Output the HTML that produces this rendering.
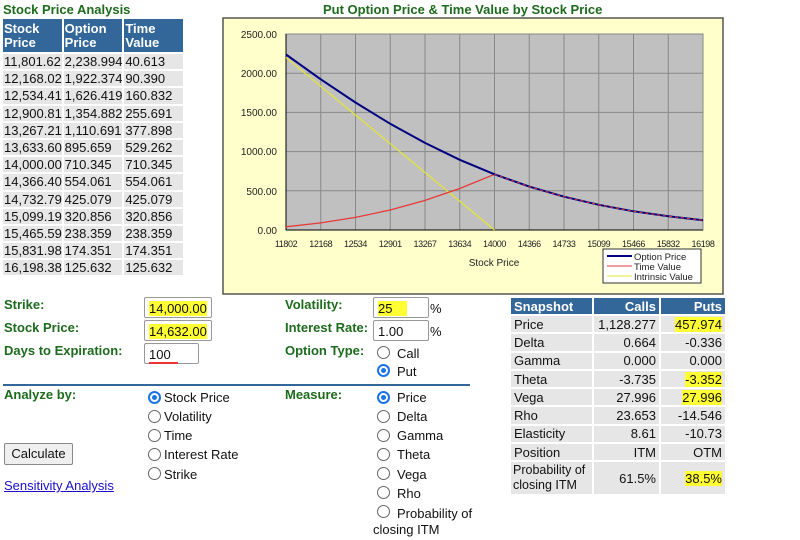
<!DOCTYPE html>
<html><head><style>
*{margin:0;padding:0;box-sizing:border-box}
body{width:800px;height:540px;background:#fff;font-family:"Liberation Sans",Arial,sans-serif;font-size:13px;color:#111;position:relative;overflow:hidden}
.a{position:absolute;white-space:nowrap}
.g{color:#1d6b1d;font-weight:bold}
table{border-collapse:separate;border-spacing:2px;position:absolute;table-layout:fixed}
td,th{background:#e6e6e6;padding:0 1px;font-size:13px;font-weight:normal;text-align:left;white-space:nowrap;overflow:hidden}
th{background:#336699;color:#fff;font-weight:bold}
.inp{position:absolute;border:1px solid #999;background:#fff;padding:3px 4px;font-size:13px;height:21px;border-radius:2px}
.hl{background:#ffff33;}
.r{position:absolute;width:13px;height:13px;border:1px solid #666;border-radius:50%;background:#fff}
.r.on{border:2px solid #1a73e8}
.r.on::after{content:"";position:absolute;left:2px;top:2px;width:5px;height:5px;border-radius:50%;background:#1a73e8}
#snap td{text-align:right;height:16.3px;padding:0 3px}
#snap td:first-child{text-align:left}
#snap th{height:16px;text-align:right;padding:0 3px}
#snap th:first-child{text-align:left}
#lt td{height:15.2px}
</style></head><body>
<div class="a g" style="left:3px;top:2px;font-size:13px">Stock Price Analysis</div>
<table id="lt" style="left:1px;top:17px;width:184px">
<colgroup><col style="width:58px"><col style="width:58px"><col style="width:58px"></colgroup>
<tr><th style="height:33px;line-height:14px">Stock<br>Price</th><th style="line-height:14px">Option<br>Price</th><th style="line-height:14px">Time<br>Value</th></tr>
<tr><td>11,801.62</td><td>2,238.994</td><td>40.613</td></tr>
<tr><td>12,168.02</td><td>1,922.374</td><td>90.390</td></tr>
<tr><td>12,534.41</td><td>1,626.419</td><td>160.832</td></tr>
<tr><td>12,900.81</td><td>1,354.882</td><td>255.691</td></tr>
<tr><td>13,267.21</td><td>1,110.691</td><td>377.898</td></tr>
<tr><td>13,633.60</td><td>895.659</td><td>529.262</td></tr>
<tr><td>14,000.00</td><td>710.345</td><td>710.345</td></tr>
<tr><td>14,366.40</td><td>554.061</td><td>554.061</td></tr>
<tr><td>14,732.79</td><td>425.079</td><td>425.079</td></tr>
<tr><td>15,099.19</td><td>320.856</td><td>320.856</td></tr>
<tr><td>15,465.59</td><td>238.359</td><td>238.359</td></tr>
<tr><td>15,831.98</td><td>174.351</td><td>174.351</td></tr>
<tr><td>16,198.38</td><td>125.632</td><td>125.632</td></tr>
</table>

<div class="a g" style="left:323px;top:2px;font-size:13px">Put Option Price &amp; Time Value by Stock Price</div>
<svg class="a" style="left:0;top:0" width="800" height="300">
<rect x="223" y="18" width="500" height="276" fill="#ffffcc" stroke="#555" stroke-width="1.5"/>
<rect x="286" y="34" width="417" height="196" fill="#c0c0c0" stroke="#888"/>
<g stroke="#888" stroke-width="1">
<line x1="320.75" y1="34" x2="320.75" y2="230"/><line x1="355.5" y1="34" x2="355.5" y2="230"/><line x1="390.25" y1="34" x2="390.25" y2="230"/><line x1="425" y1="34" x2="425" y2="230"/><line x1="459.75" y1="34" x2="459.75" y2="230"/><line x1="494.5" y1="34" x2="494.5" y2="230"/><line x1="529.25" y1="34" x2="529.25" y2="230"/><line x1="564" y1="34" x2="564" y2="230"/><line x1="598.75" y1="34" x2="598.75" y2="230"/><line x1="633.5" y1="34" x2="633.5" y2="230"/><line x1="668.25" y1="34" x2="668.25" y2="230"/>
<line x1="286" y1="73.2" x2="703" y2="73.2"/><line x1="286" y1="112.4" x2="703" y2="112.4"/><line x1="286" y1="151.6" x2="703" y2="151.6"/><line x1="286" y1="190.8" x2="703" y2="190.8"/>
</g>
<line x1="286" y1="230" x2="703" y2="230" stroke="#000"/><line x1="286" y1="34" x2="286" y2="230" stroke="#000"/>
<polyline fill="none" stroke="#e6e633" stroke-width="1.2" points="286,57.6 494.5,230"/>
<polyline fill="none" stroke="#e83838" stroke-width="1.3" points="286,226.8 320.75,222.9 355.5,217.4 390.25,210 425,200.4 459.75,188.5 494.5,174.3"/>
<polyline fill="none" stroke="#000080" stroke-width="2" points="286,54.5 320.75,79.3 355.5,102.5 390.25,123.8 425,142.9 459.75,159.8 494.5,174.3 529.25,186.6 564,196.7 598.75,204.8 633.5,211.3 668.25,216.3 703,220.2"/>
<polyline fill="none" stroke="#e83838" stroke-width="1" stroke-dasharray="3,3" points="494.5,174.3 529.25,186.6 564,196.7 598.75,204.8 633.5,211.3 668.25,216.3 703,220.2"/>
<g font-family="Liberation Sans,Arial" font-size="10" fill="#222" text-anchor="end">
<text x="277" y="38">2500.00</text><text x="277" y="77">2000.00</text><text x="277" y="116">1500.00</text><text x="277" y="155">1000.00</text><text x="277" y="195">500.00</text><text x="277" y="234">0.00</text>
</g>
<g font-family="Liberation Sans,Arial" font-size="9" fill="#222" text-anchor="middle" letter-spacing="-0.4">
<text x="286" y="247">11802</text><text x="320.75" y="247">12168</text><text x="355.5" y="247">12534</text><text x="390.25" y="247">12901</text><text x="425" y="247">13267</text><text x="459.75" y="247">13634</text><text x="494.5" y="247">14000</text><text x="529.25" y="247">14366</text><text x="564" y="247">14733</text><text x="598.75" y="247">15099</text><text x="633.5" y="247">15466</text><text x="668.25" y="247">15832</text><text x="703" y="247">16198</text>
</g>
<text x="494" y="266" font-family="Liberation Sans,Arial" font-size="10" fill="#222" text-anchor="middle">Stock Price</text>
<rect x="603" y="249" width="98" height="34" fill="#fff" stroke="#333"/>
<line x1="607" y1="256" x2="632" y2="256" stroke="#000080" stroke-width="2"/>
<line x1="607" y1="266" x2="632" y2="266" stroke="#e83838"/>
<line x1="607" y1="276" x2="632" y2="276" stroke="#e6e633"/>
<g font-family="Liberation Sans,Arial" font-size="9.5" fill="#222"><text x="634" y="260">Option Price</text><text x="634" y="270">Time Value</text><text x="634" y="280">Intrinsic Value</text></g>
</svg>

<div class="a g" style="left:4px;top:297px">Strike:</div>
<div class="a g" style="left:4px;top:320px">Stock Price:</div>
<div class="a g" style="left:4px;top:343px">Days to Expiration:</div>
<div class="inp" style="left:144px;top:297px;width:68px"><span class="hl">14,000.00</span></div>
<div class="inp" style="left:144px;top:320px;width:68px"><span class="hl">14,632.00</span></div>
<div class="inp" style="left:144px;top:343px;width:55px;height:21px"><span style="border-bottom:2px solid #e33">100&nbsp;&nbsp;</span></div>
<div class="a g" style="left:285px;top:297px">Volatility:</div>
<div class="a g" style="left:285px;top:320px">Interest Rate:</div>
<div class="a g" style="left:285px;top:343px">Option Type:</div>
<div class="inp" style="left:373px;top:297px;width:56px"><span class="hl">25&nbsp;&nbsp;&nbsp;&nbsp;</span></div>
<div class="inp" style="left:373px;top:320px;width:56px">1.00</div>
<div class="a" style="left:430px;top:301px">%</div>
<div class="a" style="left:430px;top:324px">%</div>
<div class="r" style="left:377px;top:346px"></div><div class="a" style="left:397px;top:346px">Call</div>
<div class="r on" style="left:377px;top:364px"></div><div class="a" style="left:397px;top:364px">Put</div>
<div class="a" style="left:3px;top:384px;width:467px;height:2px;background:#336699"></div>
<div class="a g" style="left:4px;top:387px">Analyze by:</div>
<div class="a g" style="left:285px;top:387px">Measure:</div>
<div class="r on" style="left:148px;top:391px"></div><div class="a" style="left:164px;top:390px">Stock Price</div>
<div class="r" style="left:148px;top:410px"></div><div class="a" style="left:164px;top:409px">Volatility</div>
<div class="r" style="left:148px;top:429px"></div><div class="a" style="left:164px;top:428px">Time</div>
<div class="r" style="left:148px;top:448px"></div><div class="a" style="left:164px;top:447px">Interest Rate</div>
<div class="r" style="left:148px;top:467px"></div><div class="a" style="left:164px;top:467px">Strike</div>
<div class="r on" style="left:377px;top:391px"></div><div class="a" style="left:397px;top:390px">Price</div>
<div class="r" style="left:377px;top:410px"></div><div class="a" style="left:397px;top:409px">Delta</div>
<div class="r" style="left:377px;top:429px"></div><div class="a" style="left:397px;top:428px">Gamma</div>
<div class="r" style="left:377px;top:448px"></div><div class="a" style="left:397px;top:447px">Theta</div>
<div class="r" style="left:377px;top:467px"></div><div class="a" style="left:397px;top:467px">Vega</div>
<div class="r" style="left:377px;top:486px"></div><div class="a" style="left:397px;top:486px">Rho</div>
<div class="r" style="left:377px;top:505px"></div><div class="a" style="left:397px;top:506px">Probability of</div>
<div class="a" style="left:373px;top:522px">closing ITM</div>
<div class="a" style="left:4px;top:443px;width:69px;height:22px;border:1px solid #888;background:#efefef;border-radius:2px;text-align:center;line-height:20px">Calculate</div>
<div class="a" style="left:4px;top:478px;color:#1a0dcc;text-decoration:underline">Sensitivity Analysis</div>

<table id="snap" style="left:509px;top:296px;width:218px">
<colgroup><col style="width:81px"><col style="width:65px"><col style="width:64px"></colgroup>
<tr><th>Snapshot</th><th>Calls</th><th>Puts</th></tr>
<tr><td>Price</td><td>1,128.277</td><td><span class="hl">457.974</span></td></tr>
<tr><td>Delta</td><td>0.664</td><td>-0.336</td></tr>
<tr><td>Gamma</td><td>0.000</td><td>0.000</td></tr>
<tr><td>Theta</td><td>-3.735</td><td><span class="hl">-3.352</span></td></tr>
<tr><td>Vega</td><td>27.996</td><td><span class="hl">27.996</span></td></tr>
<tr><td>Rho</td><td>23.653</td><td>-14.546</td></tr>
<tr><td>Elasticity</td><td>8.61</td><td>-10.73</td></tr>
<tr><td>Position</td><td>ITM</td><td>OTM</td></tr>
<tr><td style="height:32px;line-height:15px;font-size:12.5px;padding:0 2px">Probability of<br>closing ITM</td><td>61.5%</td><td><span class="hl">38.5%</span></td></tr>
</table>
</body></html>
